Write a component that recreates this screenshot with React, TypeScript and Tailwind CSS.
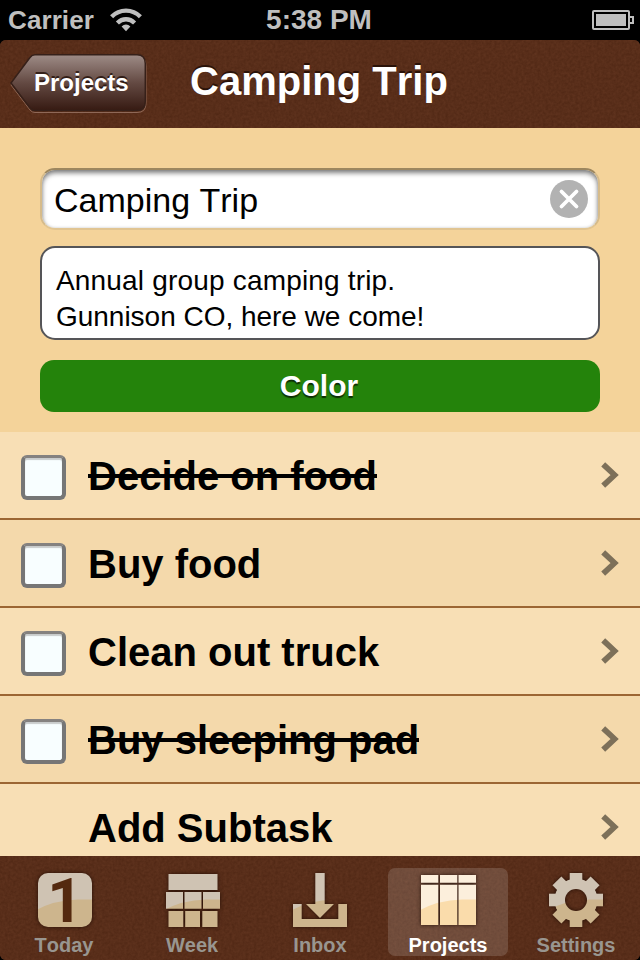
import React from "react";

const tasks = [
  { label: "Decide on food", done: true },
  { label: "Buy food", done: false },
  { label: "Clean out truck", done: false },
  { label: "Buy sleeping pad", done: true },
];

function Grain({ id }: { id: string }) {
  return (
    <svg className="pointer-events-none absolute inset-0 h-full w-full" aria-hidden="true">
      <filter id={id} x="0" y="0" width="100%" height="100%" colorInterpolationFilters="sRGB">
        <feTurbulence type="fractalNoise" baseFrequency="0.37" numOctaves="2" seed="4" />
        <feColorMatrix type="matrix" values="0.08 0 0 0 0.307  0.06 0 0 0 0.149  0.05 0 0 0 0.075  0 0 0 0 1" />
      </filter>
      <rect width="100%" height="100%" filter={`url(#${id})`} />
    </svg>
  );
}

function StatusBar() {
  return (
    <div className="grid h-10 grid-cols-3 items-center bg-black text-[#bfbfbf]">
      <div className="flex items-center gap-4 pl-2">
        <span className="text-[26px] leading-10 font-bold tracking-[0.1px]">Carrier</span>
        <svg className="h-6 w-8" viewBox="0 0 32 24" fill="none" stroke="currentColor">
          <path d="M1.600 8.800C9.600 0.600 22.400 0.600 30.400 8.800" strokeWidth="4.300" />
          <path d="M7.400 15C12.300 10 19.700 10 24.600 15" strokeWidth="4.300" />
          <path d="M16 23.200L11.600 18.600C14.200 15.800 17.800 15.800 20.400 18.600Z" fill="currentColor" stroke="none" />
        </svg>
      </div>
      <span className="-ml-[2px] text-center text-[28px] leading-10 font-bold whitespace-nowrap">5:38 PM</span>
      <svg className="mr-[5px] h-5 w-[43px] justify-self-end" viewBox="0 0 43 20" fill="none" stroke="currentColor">
        <rect x="1" y="1" width="36" height="18" rx="1" strokeWidth="2" />
        <rect x="4" y="4" width="30" height="12" fill="currentColor" stroke="none" />
        <path d="M38 7h3v6h-3" strokeWidth="2" />
      </svg>
    </div>
  );
}

function NavBar() {
  return (
    <header className="relative h-[88px] overflow-hidden rounded-t-[6px] bg-[#592e1a]">
      <Grain id="nav-grain" />
      <div className="relative grid h-full grid-cols-[146px_1fr_146px] items-center pr-3 pl-[10px]">
        <button className="relative h-[62px] w-[138px] text-left">
          <svg className="absolute inset-0" width="138" height="62" viewBox="0 0 138 62">
            <defs>
              <linearGradient id="back" x1="0" y1="0" x2="0" y2="1">
                <stop offset="0" stopColor="#9e8c87" />
                <stop offset="0.5" stopColor="#644a43" />
                <stop offset="1" stopColor="#361a12" />
              </linearGradient>
            </defs>
            <path d="M25 3.500H127Q136 3.500 136 12.500V50.500Q136 59.500 127 59.500H25Q22 59.500 20 57L1 32L20 6.500Q22 3.500 25 3.500Z" fill="none" stroke="#8f6857" />
            <path d="M25 1.700H127Q135.300 1.700 135.300 10.500V48.500Q135.300 57.500 127 57.500H25Q22 57.500 20 55L1 30L20 4.500Q22 1.700 25 1.700Z" fill="url(#back)" stroke="#362019" strokeWidth="1.500" />
          </svg>
          <span className="relative -mt-[2px] block pl-6 text-[24px] leading-[58px] font-bold text-white [text-shadow:0_-2px_0_rgba(30,12,5,0.75)]">Projects</span>
        </button>
        <h1 className="-mt-[6px] text-center text-[40px] leading-[44px] font-bold whitespace-nowrap text-white [font-kerning:none] [text-shadow:0_-2px_0_rgba(30,12,5,0.8)]">Camping Trip</h1>
      </div>
    </header>
  );
}

function ProjectForm() {
  return (
    <section className="flex h-[304px] flex-col bg-[#f4d39a] px-10 pt-10">
      <div className="flex h-[62px] items-center justify-between rounded-[15px] border-2 border-t-[#9d875f] border-r-[#d6bb8a] border-b-[#e1c592] border-l-[#d6bb8a] bg-white pr-[10px] pl-3 shadow-[inset_0_3px_5px_rgba(0,0,0,0.5),inset_0_0_3px_rgba(0,0,0,0.12)]">
        <span className="pt-[2px] text-[34px] leading-[56px] text-black [font-kerning:none]">Camping Trip</span>
        <svg width="38" height="38" viewBox="0 0 38 38">
          <circle cx="19" cy="19" r="19" fill="#b2b2b2" />
          <path d="M11.500 11.500L26.500 26.500M26.500 11.500L11.500 26.500" stroke="white" strokeWidth="3.800" strokeLinecap="round" />
        </svg>
      </div>
      <div className="mt-4 h-[94px] rounded-[15px] border-2 border-[#555558] bg-white pt-[15px] pl-[14px] text-[28px] leading-9 text-black [font-kerning:none]">
        <p className="tracking-[0.18px]">Annual group camping trip.</p>
        <p className="tracking-[-0.020px]">Gunnison CO, here we come!</p>
      </div>
      <button className="mt-5 h-[52px] rounded-[14px] bg-[#24830b] pr-[2px] text-[30px] leading-[52px] font-bold text-white [text-shadow:0_2px_1px_rgba(0,0,0,0.65)]">Color</button>
    </section>
  );
}

function Chevron() {
  return (
    <svg className="mr-[21px] mb-[1px] ml-auto" width="18" height="26" viewBox="0 0 18 26" fill="none">
      <path d="M2.200 2.300L13.600 13L2.200 23.700" stroke="#7d7059" strokeWidth="5.700" />
    </svg>
  );
}

function TaskRow({ label, done, shade }: { label: string; done: boolean; shade: boolean }) {
  return (
    <li className={`flex h-[88px] items-center border-b-2 border-[#9c6633] ${shade ? "bg-[#f4d9ab]" : "bg-[#f8dfb5]"}`}>
      <span className="mt-[5px] mr-[1px] ml-[21px] h-[45px] w-[45px] rounded-[6px] border-4 border-t-3 border-[#767676] border-t-[#858280] bg-[#f8feff] shadow-[inset_0_2px_1px_#c9cccc]" />
      <span className="relative ml-[21px] pt-[2px] text-[40px] leading-[84px] font-bold text-black [font-kerning:none]">
        {label}
        {done && <span className="absolute top-[42px] left-0 h-1 w-full bg-black" />}
      </span>
      <Chevron />
    </li>
  );
}

function Tints({ id, top, bottom }: { id: string; top: string; bottom: string }) {
  return (
    <pattern id={id} patternUnits="userSpaceOnUse" width="60" height="60">
      <rect width="60" height="60" fill={top} />
      <path d="M0 41Q20 30 44 29.500H60V60H0Z" fill={bottom} />
    </pattern>
  );
}

const gearTeeth = [0, 45, 90, 135, 180, 225, 270, 315];

function TabIcon({ name }: { name: string }) {
  const fill = `url(#tint-${name})`;
  const active = name === "Projects";
  return (
    <svg className="overflow-visible [filter:drop-shadow(0_0_2px_rgba(25,8,0,0.8))]" width="60" height="60" viewBox="0 0 60 60">
      <defs>
        <Tints id={`tint-${name}`} top={active ? "#fcefdc" : "#cfc3b3"} bottom={active ? "#fadcab" : "#cdb58d"} />
      </defs>
      {name === "Today" && (
        <>
          <rect x="4" y="3" width="54" height="54" rx="10" fill={fill} />
          <text x="13.200" y="52" fontFamily="Roboto, sans-serif" fontWeight="700" fontSize="62" fill="#54290f">1</text>
        </>
      )}
      {name === "Week" && (
        <path fill={fill} d="M6.500 4h49v16h-49zM4 22h17v16.700H4zM22.500 22h17v16.700h-17zM41 22h17v16.700H41zM6.500 41h14.800v16H6.500zM23.200 41h14.800v16H23.200zM40.300 41h15.200v16H40.300z" />
      )}
      {name === "Inbox" && (
        <path fill={fill} d="M25.300 3h9.400v31h9.300L30 48L16 34h9.300zM3 34h8.700v15h36.600V34H57v23H3z" />
      )}
      {name === "Projects" && (
        <path fill={fill} d="M3 5h17.300v7.700H3zM22 5h17.300v7.700H22zM40.500 5h17.500v7.700H40.500zM3 14.700h17.300v40.300H3zM22 14.700h17.300v40.300H22zM40.500 14.700h17.500v40.300H40.500z" />
      )}
      {name === "Settings" && (
        <>
          <mask id="gear">
            <g fill="white">
              <circle cx="30" cy="30" r="21.500" />
              {gearTeeth.map((a) => (
                <path key={a} d="M23.700 3h12.600v10H23.700z" transform={`rotate(${a} 30 30)`} />
              ))}
            </g>
            <circle cx="30" cy="30" r="11" fill="black" />
          </mask>
          <rect width="60" height="60" fill={fill} mask="url(#gear)" />
        </>
      )}
    </svg>
  );
}

function TabBar() {
  return (
    <nav className="relative h-[104px] overflow-hidden rounded-b-[6px] bg-[#572c18]">
      <Grain id="tab-grain" />
      <div className="relative grid h-full grid-cols-5 pt-3 pb-1">
        {["Today", "Week", "Inbox", "Projects", "Settings"].map((name) => (
          <div
            key={name}
            className={`mx-1 flex flex-col items-center rounded-[7px] pt-[2px] text-[20px] leading-[22px] font-bold ${
              name === "Projects" ? "bg-white/15 text-white" : "text-[#999690]"
            }`}
          >
            <TabIcon name={name} />
            <span className="mt-[4px] [font-kerning:none]">{name}</span>
          </div>
        ))}
      </div>
    </nav>
  );
}

export default function App() {
  return (
    <div className="flex h-[960px] w-[640px] flex-col overflow-hidden bg-black font-['Liberation_Sans',Arial,sans-serif]">
      <StatusBar />
      <NavBar />
      <ProjectForm />
      <ul className="h-[424px] overflow-hidden bg-[#f8dfb5]">
        {tasks.map((task, i) => (
          <TaskRow key={task.label} label={task.label} done={task.done} shade={i % 2 === 1} />
        ))}
        <li className="flex h-[88px] items-center border-b-2 border-[#9c6633] pl-[88px]">
          <span className="pt-[2px] text-[40px] leading-[84px] font-bold text-black [font-kerning:none]">Add Subtask</span>
          <Chevron />
        </li>
      </ul>
      <TabBar />
    </div>
  );
}
